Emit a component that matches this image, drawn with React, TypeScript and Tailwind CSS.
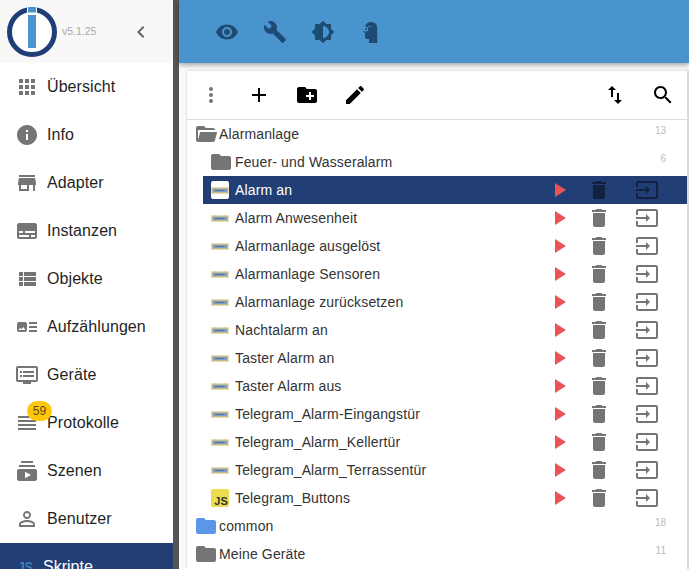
import React from "react";

const P = {
  apps: "M4 8h4V4H4v4zm6 12h4v-4h-4v4zm-6 0h4v-4H4v4zm0-6h4v-4H4v4zm6 0h4v-4h-4v4zm6-10v4h4V4h-4zm-6 4h4V4h-4v4zm6 6h4v-4h-4v4zm0 6h4v-4h-4v4z",
  info: "M12 2C6.48 2 2 6.48 2 12s4.48 10 10 10 10-4.48 10-10S17.52 2 12 2zm1 15h-2v-6h2v6zm0-8h-2V7h2v2z",
  store: "M20 4H4v2h16V4zm1 10v-2l-1-5H4l-1 5v2h1v6h10v-6h4v6h2v-6h1zm-9 4H6v-4h6v4z",
  subtitles: "M20 4H4c-1.1 0-2 .9-2 2v12c0 1.1.9 2 2 2h16c1.1 0 2-.9 2-2V6c0-1.1-.9-2-2-2zM4 12h4v2H4v-2zm10 6H4v-2h10v2zm6 0h-4v-2h4v2zm0-4H10v-2h10v2z",
  list: "M4 14h4v-4H4v4zm0 5h4v-4H4v4zM4 9h4V5H4v4zm5 5h12v-4H9v4zm0 5h12v-4H9v4zM9 5v4h12V5H9z",
  art: "M22 13h-8v-2h8v2zm0-6h-8v2h8V7zm-8 10h8v-2h-8v2zm-2-8v6c0 1.1-.9 2-2 2H4c-1.1 0-2-.9-2-2V9c0-1.1.9-2 2-2h6c1.1 0 2 .9 2 2zm-1.5 6l-2.25-3-1.75 2.26-1.25-1.51L3.5 15h7z",
  dvr: "M21 3H3c-1.1 0-2 .9-2 2v12c0 1.1.9 2 2 2h5v2h8v-2h5c1.1 0 1.99-.9 1.99-2L23 5c0-1.1-.9-2-2-2zm0 14H3V5h18v12zm-2-9H8v2h11V8zm0 4H8v2h11v-2zM7 8H5v2h2V8zm0 4H5v2h2v-2z",
  reorder: "M3 15h18v-2H3v2zm0 4h18v-2H3v2zm0-8h18V9H3v2zm0-6v2h18V5H3z",
  subs: "M20 8H4V6h16v2zm-2-6H6v2h12V2zm4 10v8c0 1.1-.9 2-2 2H4c-1.1 0-2-.9-2-2v-8c0-1.1.9-2 2-2h16c1.1 0 2 .9 2 2zm-6 4l-6-3.27v6.53L16 16z",
  person: "M12 5.9c1.16 0 2.1.94 2.1 2.1s-.94 2.1-2.1 2.1S9.9 9.16 9.9 8s.94-2.1 2.1-2.1m0 9c2.97 0 6.1 1.46 6.1 2.1v1.1H5.9V17c0-.64 3.13-2.1 6.1-2.1M12 4C9.79 4 8 5.79 8 8s1.79 4 4 4 4-1.79 4-4-1.79-4-4-4zm0 9c-2.67 0-8 1.34-8 4v3h16v-3c0-2.66-5.33-4-8-4z",
  eye: "M12 4.5C7 4.5 2.73 7.61 1 12c1.73 4.39 6 7.5 11 7.5s9.27-3.11 11-7.5c-1.73-4.39-6-7.5-11-7.5zM12 17c-2.76 0-5-2.24-5-5s2.24-5 5-5 5 2.24 5 5-2.24 5-5 5zm0-8c-1.66 0-3 1.34-3 3s1.34 3 3 3 3-1.34 3-3-1.34-3-3-3z",
  build: "M22.7 19l-9.1-9.1c.9-2.3.4-5-1.5-6.9-2-2-5-2.4-7.4-1.3L9 6 6 9 1.6 4.7C.4 7.1.9 10.1 2.9 12.1c1.9 1.9 4.6 2.4 6.9 1.5l9.1 9.1c.4.4 1 .4 1.4 0l2.3-2.3c.5-.4.5-1.1.1-1.4z",
  bright: "M20 15.31L23.31 12 20 8.69V4h-4.69L12 .69 8.69 4H4v4.69L.69 12 4 15.31V20h4.69L12 23.31 15.31 20H20v-4.69zM12 18V6c3.31 0 6 2.69 6 6s-2.69 6-6 6z",
  plus: "M19 13h-6v6h-2v-6H5v-2h6V5h2v6h6v2z",
  more: "M12 8c1.1 0 2-.9 2-2s-.9-2-2-2-2 .9-2 2 .9 2 2 2zm0 2c-1.1 0-2 .9-2 2s.9 2 2 2 2-.9 2-2-.9-2-2-2zm0 6c-1.1 0-2 .9-2 2s.9 2 2 2 2-.9 2-2-.9-2-2-2z",
  newFolder: "M20 6h-8l-2-2H4c-1.11 0-1.99.89-1.99 2L2 18c0 1.11.89 2 2 2h16c1.11 0 2-.89 2-2V8c0-1.11-.89-2-2-2zm-1 8h-3v3h-2v-3h-3v-2h3V9h2v3h3v2z",
  edit: "M3 17.25V21h3.75L17.81 9.94l-3.75-3.75L3 17.25zM20.71 7.04c.39-.39.39-1.02 0-1.41l-2.34-2.34c-.39-.39-1.02-.39-1.41 0l-1.83 1.83 3.75 3.75 1.83-1.83z",
  swap: "M16 17.01V10h-2v7.01h-3L15 21l4-3.99h-3zM9 3L5 6.99h3V14h2V6.99h3L9 3z",
  search: "M15.5 14h-.79l-.28-.27C15.41 12.59 16 11.11 16 9.5 16 5.91 13.09 3 9.5 3S3 5.91 3 9.5 5.91 16 9.5 16c1.61 0 3.09-.59 4.23-1.57l.27.28v.79l5 4.99L20.49 19l-4.99-5zm-6 0C7.01 14 5 11.99 5 9.5S7.01 5 9.5 5 14 7.01 14 9.5 11.99 14 9.5 14z",
  trash: "M6 19c0 1.1.9 2 2 2h8c1.1 0 2-.9 2-2V7H6v12zM19 4h-3.5l-1-1h-5l-1 1H5v2h14V4z",
  input: "M21 3.01H3c-1.1 0-2 .9-2 2V9h2V4.99h18v14.03H3V15H1v4.01c0 1.1.9 1.98 2 1.98h18c1.1 0 2-.88 2-1.98v-14c0-1.11-.9-2-2-2zM11 16l4-4-4-4v3H1v2h10v3z",
  folder: "M10 4H4c-1.1 0-1.99.9-1.99 2L2 18c0 1.1.9 2 2 2h16c1.1 0 2-.9 2-2V8c0-1.1-.9-2-2-2h-8l-2-2z",
  folderOpen: "M19 20H4c-1.11 0-2-.9-2-2V6c0-1.11.89-2 2-2h6l2 2h7a2 2 0 0 1 2 2H4v10l2.14-8h17.07l-2.28 8.5c-.23.87-1.01 1.5-1.93 1.5z",
  chevron: "M15.41 7.41L14 6l-6 6 6 6 1.41-1.41L10.83 12z",
  head: "M12 2C8.4 2 6 4.6 6 8L4 11.6c-.2.5.1.9.6.9H6V17c0 1.1.9 2 2 2h2v4h8.2V7.6C18.2 4.2 15.6 2 12 2z",
};

const Icon = ({ d, className }: { d: string; className: string }) => (
  <svg viewBox="0 0 24 24" className={className} fill="currentColor">
    <path d={d} />
  </svg>
);

const HeadIcon = () => (
  <svg viewBox="0 0 24 24" className="w-[24px] h-[24px]" fill="currentColor">
    <path d={P.head} />
    <circle cx="6.5" cy="9" r="2.6" fill="#4a94cd" />
    <circle cx="7" cy="9" r="1" />
    <rect x="9.5" y="6" width="2" height="1.2" fill="#4a94cd" />
  </svg>
);

const Logo = () => (
  <svg viewBox="0 0 50 50" className="w-[50px] h-[50px]">
    <circle cx="25" cy="25" r="22.5" fill="#fff" stroke="#1f3e75" strokeWidth="5" />
    <rect x="20" y="0" width="10" height="8" fill="#fff" />
    <rect x="21" y="0" width="8" height="5.5" fill="#4a94cd" />
    <rect x="21" y="8" width="8" height="33" fill="#4a94cd" />
  </svg>
);

// small blockly thumbnail used by the script rows
const Blockly = () => (
  <svg viewBox="0 0 18 7" className="w-[18px] h-[7px]">
    <rect x="0" y="0" width="18" height="7" rx="1" fill="#e3dcb0" />
    <rect x="1" y="1" width="16" height="5" fill="#c4bd92" />
    <rect x="2" y="2" width="14" height="3" fill="#7d9cbd" />
    <rect x="4" y="3" width="9" height="1" fill="#5d7c9c" />
  </svg>
);

const JsIcon = () => (
  <div className="w-[18px] h-[18px] rounded-[2px] bg-[#ecdc50] flex items-end justify-end pr-[1px] text-[11px] leading-[12px] font-bold text-[#333]">
    JS
  </div>
);

const navItems = [
  { label: "Übersicht", d: P.apps },
  { label: "Info", d: P.info },
  { label: "Adapter", d: P.store },
  { label: "Instanzen", d: P.subtitles },
  { label: "Objekte", d: P.list },
  { label: "Aufzählungen", d: P.art },
  { label: "Geräte", d: P.dvr },
  { label: "Protokolle", d: P.reorder, badge: "59" },
  { label: "Szenen", d: P.subs },
  { label: "Benutzer", d: P.person },
];

const scripts = [
  "Alarm an",
  "Alarm Anwesenheit",
  "Alarmanlage ausgelöst",
  "Alarmanlage Sensoren",
  "Alarmanlage zurücksetzen",
  "Nachtalarm an",
  "Taster Alarm an",
  "Taster Alarm aus",
  "Telegram_Alarm-Eingangstür",
  "Telegram_Alarm_Kellertür",
  "Telegram_Alarm_Terrassentür",
  "Telegram_Buttons",
];

const Sidebar = () => (
  <div className="w-[173px] shrink-0 bg-white flex flex-col overflow-hidden">
    <div className="h-[63px] shrink-0 bg-[#f8f8f8] flex items-center pl-[7px]">
      <Logo />
      <span className="ml-[5px] text-[10.5px] text-[#aaa] mt-[1px]">v5.1.25</span>
      <Icon d={P.chevron} className="w-[24px] h-[24px] text-[#666] ml-[33px]" />
    </div>
    {navItems.map(item => (
      <div key={item.label} className="h-[48px] shrink-0 flex items-center pl-[15px] relative text-[16px] tracking-[0.08px] text-[#1f1f1f]">
        <Icon d={item.d} className="w-[24px] h-[24px] text-[#757575] shrink-0" />
        <span className="ml-[8px]">{item.label}</span>
        {item.badge && (
          <div className="absolute left-[27px] top-[2px] w-[25px] h-[20px] rounded-full bg-[#fdc70e] text-[12px] text-[#5f4d10] flex items-center justify-center">
            {item.badge}
          </div>
        )}
      </div>
    ))}
    <div className="h-[48px] shrink-0 bg-[#223f75] flex items-center pl-[18px] text-[16px] text-white">
      <span className="w-[14px] text-[15px] font-bold text-[#3f7fba] scale-x-[0.8] origin-left">JS</span>
      <span className="ml-[11px]">Skripte</span>
    </div>
  </div>
);

const Actions = ({ selected }: { selected?: boolean }) => {
  const tone = selected ? "text-[#12213f]" : "text-[#757575]";
  return (
    <div className="ml-auto flex items-center shrink-0">
      <Icon d="M6 5l11 7-11 7z" className="w-[24px] h-[24px] text-[#ec5353] mr-[14px]" />
      <Icon d={P.trash} className={`w-[24px] h-[24px] mr-[24px] ${tone}`} />
      <Icon d={P.input} className={`w-[24px] h-[24px] mr-[28px] ${tone}`} />
    </div>
  );
};

const ScriptRow = ({ name, selected }: { name: string; selected?: boolean }) => (
  <div className={`h-[28px] flex items-center ml-[16px] pl-[8px] ${selected ? "bg-[#223f75] text-white" : "text-[#333]"}`}>
    <div className={`w-[18px] h-[18px] rounded-[2px] flex items-center justify-center shrink-0 ${selected ? "bg-white" : ""}`}>
      {name === "Telegram_Buttons" ? <JsIcon /> : <Blockly />}
    </div>
    <span className="ml-[6px]">{name}</span>
    <Actions selected={selected} />
  </div>
);

const FolderRow = ({ name, count, d, color, indent }: { name: string; count: string; d: string; color: string; indent?: boolean }) => (
  <div className={`h-[28px] flex items-center text-[#333] ${indent ? "pl-[22px]" : "pl-[7px]"}`}>
    <Icon d={d} className={`w-[24px] h-[24px] shrink-0 ${color}`} />
    <span className={indent ? "ml-[2px]" : "ml-[1px]"}>{name}</span>
    <span className="ml-auto mr-[21px] -mt-[8px] text-[10px] tracking-normal text-[#bbb]">{count}</span>
  </div>
);

export default function App() {
  return (
    <div className="w-[689px] h-[569px] flex overflow-hidden bg-[#555] font-['Liberation_Sans',Arial,sans-serif]">
      <Sidebar />
      <div className="ml-[6px] flex-1 min-w-0 flex flex-col bg-[#fafafa]">
        <div className="h-[63px] shrink-0 bg-[#4a94cd] shadow-[0_2px_5px_rgba(0,0,0,0.35)] flex items-center pl-[36px] gap-[24px] text-[#1d4b73] z-10">
          <Icon d={P.eye} className="w-[24px] h-[24px]" />
          <Icon d={P.build} className="w-[24px] h-[24px]" />
          <Icon d={P.bright} className="w-[24px] h-[24px]" />
          <HeadIcon />
        </div>
        <div className="mt-[8px] ml-[8px] border-r-2 border-[#d9d9d9] flex-1 min-h-0 bg-white shadow-[0_0_2px_rgba(0,0,0,0.25)] text-[14px] tracking-[0.14px] overflow-hidden">
          <div className="h-[49px] border-b border-[#ddd] flex items-center text-black">
            <Icon d={P.more} className="w-[24px] h-[24px] ml-[12px] text-[#757575]" />
            <Icon d={P.plus} className="w-[24px] h-[24px] ml-[24px]" />
            <Icon d={P.newFolder} className="w-[24px] h-[24px] ml-[24px]" />
            <Icon d={P.edit} className="w-[24px] h-[24px] ml-[24px]" />
            <Icon d={P.swap} className="w-[24px] h-[24px] ml-auto" />
            <Icon d={P.search} className="w-[24px] h-[24px] ml-[24px] mr-[12px]" />
          </div>
          <FolderRow name="Alarmanlage" count="13" d={P.folderOpen} color="text-[#757575]" />
          <FolderRow name="Feuer- und Wasseralarm" count="6" d={P.folder} color="text-[#757575]" indent />
          {scripts.map((name, i) => (
            <ScriptRow key={name} name={name} selected={i === 0} />
          ))}
          <FolderRow name="common" count="18" d={P.folder} color="text-[#5b96e8]" />
          <FolderRow name="Meine Geräte" count="11" d={P.folder} color="text-[#757575]" />
        </div>
      </div>
    </div>
  );
}
